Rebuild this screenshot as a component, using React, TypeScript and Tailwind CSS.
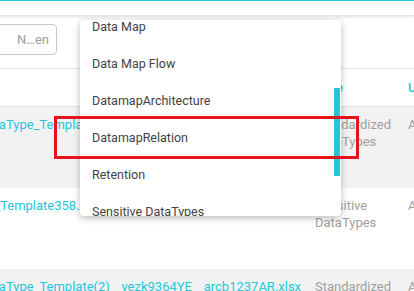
import React from "react";

const options = [
	"Data Map",
	"Data Map Flow",
	"DatamapArchitecture",
	"DatamapRelation",
	"Retention",
	"Sensitive DataTypes",
	"Standardized DataTypes",
];

const rows = [
	{
		file: "DataType_Template_kq71mz.xlsx",
		type: ["Standardized", "DataTypes"],
		by: "Admin",
		shade: true,
	},
	{
		file: "PII_Template358.xlsx",
		type: ["Sensitive", "DataTypes"],
		by: "Admin",
		shade: false,
	},
	{
		file: "DataType_Template(2)__yezk9364YE__arcb1237AR.xlsx",
		type: ["Standardized", "DataTypes"],
		by: "Admin",
		shade: true,
	},
];

export default function App() {
	return (
		<div className="relative w-[414px] h-[291px] overflow-hidden bg-white font-['Roboto',sans-serif]">
			{/* top bar */}
			<div className="relative z-10 h-[15px] border-t border-[#26c6da] bg-white shadow-[0_2px_3px_rgba(0,0,0,0.12)]" />

			{/* toolbar */}
			<div className="h-[53px] pt-[9px]">
				<div className="-ml-[60px] flex h-[31px] w-[117px] items-center justify-end rounded-[4px] border border-[#c8c8c8] pr-[7px] text-[13px] text-[#9e9e9e]">
					N…en
				</div>
			</div>

			{/* table */}
			<div className="-ml-[21px] w-[560px] border-t border-[#e3e3e3]">
				<div className="flex h-[38px] items-center border-b border-[#e3e3e3] text-[13px] font-medium text-[#26c6da]">
					<div className="w-[336px]" />
					<div className="w-[93px]">Type</div>
					<div>Uploaded By</div>
				</div>
				{rows.map((r, i) => (
					<div
						key={i}
						className={`flex h-[81px] pt-[9px] text-[13px] leading-[17px] ${r.shade ? "bg-[#f2f2f2]" : "bg-white"}`}
					>
						<div className="w-[336px] whitespace-nowrap text-[#26c6da]">{r.file}</div>
						<div className="w-[93px] text-[#a0a0a0]">
							{r.type[0]}
							<br />
							{r.type[1]}
						</div>
						<div className="text-[#a0a0a0]">{r.by}</div>
					</div>
				))}
			</div>

			{/* dropdown */}
			<div className="absolute left-[80px] top-[20px] h-[196px] w-[261px] overflow-hidden rounded-[4px] bg-white shadow-[0_2px_7px_rgba(0,0,0,0.28)]">
				<div className="-mt-[11px]">
					{options.map((o) => (
						<div key={o} className="flex h-[37px] items-center pl-[12px] text-[12.5px] text-[#424242]">
							{o}
						</div>
					))}
				</div>
				<div className="absolute right-[1px] top-[68px] h-[88px] w-[6px] bg-[#26c6da]" />
			</div>

			{/* highlight */}
			<div className="absolute left-[54px] top-[116px] h-[43px] w-[305px] border-[3px] border-[#e4141c]" />
		</div>
	);
}
